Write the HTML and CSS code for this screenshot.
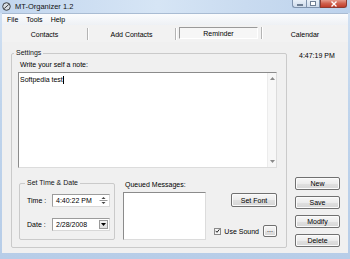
FILE: index.html
```html
<!DOCTYPE html>
<html>
<head>
<meta charset="utf-8">
<link rel="stylesheet" href="styles.css">
</head>
<body>
<div class="window">
  <div class="titlebar">
    <svg class="app-icon" width="9" height="9" viewBox="0 0 9 9"><circle cx="4.5" cy="4.5" r="3.8" fill="#d8dde2" stroke="#3b3f44" stroke-width="1"/><path d="M2.2 6.6 L6.8 2.4" stroke="#3b3f44" stroke-width="1"/></svg>
    <span class="title">MT-Organizer 1.2</span>
    <div class="controls">
      <span class="ctl min"><span class="min-bar"></span></span>
      <span class="ctl max"><span class="max-box"></span></span>
      <span class="ctl close"><svg width="8" height="6" viewBox="0 0 8 6"><path d="M1.5 0.5 L6.5 5.5 M6.5 0.5 L1.5 5.5" stroke="#fff" stroke-width="1.4"/></svg></span>
    </div>
  </div>
  <div class="client">
    <div class="menubar"><span class="menu">File</span><span class="menu">Tools</span><span class="menu">Help</span></div>
    <div class="tabs">
      <div class="tab"><span class="tab-label">Contacts</span></div>
      <div class="tab"><span class="tab-label">Add Contacts</span></div>
      <div class="tab active"><span class="tab-label">Reminder</span></div>
      <div class="tab last"><span class="tab-label">Calendar</span></div>
    </div>
    <div class="main">
      <fieldset class="group settings">
        <legend>Settings</legend>
        <div class="note-label">Write your self a note:</div>
        <div class="note">
          <div class="note-text">Softpedia test<span class="caret"></span></div>
          <div class="vscroll">
            <svg width="5" height="3" viewBox="0 0 5 3"><path d="M0 3 L2.5 0 L5 3 Z" fill="#8a8a8a"/></svg>
            <svg width="5" height="3" viewBox="0 0 5 3"><path d="M0 0 L2.5 3 L5 0 Z" fill="#8a8a8a"/></svg>
          </div>
        </div>
        <div class="bottom-row">
          <fieldset class="group timedate">
            <legend>Set Time &amp; Date</legend>
            <div class="field-row">
              <span class="lbl">Time :</span>
              <div class="input"><span class="val">4:40:22 PM</span>
                <svg class="spin" width="9" height="9" viewBox="0 0 9 9"><path d="M2.5 3 L4.5 1 L6.5 3 Z" fill="#444"/><path d="M0.5 4.5 H8.5" stroke="#9a9a9a" stroke-width="1"/><path d="M2.5 6 L4.5 8 L6.5 6 Z" fill="#444"/></svg>
              </div>
            </div>
            <div class="field-row second">
              <span class="lbl">Date :</span>
              <div class="input"><span class="val">2/28/2008</span>
                <span class="drop"><svg width="5" height="3" viewBox="0 0 5 3"><path d="M0 0 L2.5 3 L5 0 Z" fill="#000"/></svg></span>
              </div>
            </div>
          </fieldset>
          <div class="queued">
            <div class="q-label">Queued Messages:</div>
            <div class="listbox"></div>
          </div>
          <div class="opts">
            <span class="btn setfont">Set Font</span>
            <div class="sound-row">
              <span class="check"><svg width="6" height="6" viewBox="0 0 6 6"><path d="M0.8 2.8 L2.4 4.6 L5.3 1" stroke="#222" stroke-width="1.2" fill="none"/></svg></span>
              <span class="sound-label">Use Sound</span>
              <span class="btn dots">...</span>
            </div>
          </div>
        </div>
      </fieldset>
      <div class="side">
        <div class="clock">4:47:19 PM</div>
        <div class="actions">
          <span class="btn act">New</span>
          <span class="btn act">Save</span>
          <span class="btn act">Modify</span>
          <span class="btn act">Delete</span>
        </div>
      </div>
    </div>
  </div>
</div>
</body>
</html>
```
FILE: styles.css
```css
* { box-sizing: border-box; }
html, body { margin: 0; padding: 0; }
body {
  font-family: "Liberation Sans", Arial, sans-serif;
  font-size: 7px;
  color: #000;
  background: #bcd2eb;
}
.window {
  width: 350px;
  height: 259px;
  display: flex;
  flex-direction: column;
  background: linear-gradient(to bottom, #d3e2f3 0%, #bfd4ec 40%, #b7cde8 100%);
}
.titlebar {
  height: 13px;
  flex: none;
  display: flex;
  align-items: center;
  padding-left: 2px;
  background: linear-gradient(to right, #c2d6ee 0%, #d6e5f5 45%, #c9dbf0 70%, #bcd2ec 100%);
}
.app-icon { flex: none; margin-right: 4px; }
.title { font-size: 7.5px; line-height: 13px; color: #111; }
.controls {
  margin-left: auto;
  align-self: flex-start;
  display: flex;
  margin-right: 3px;
}
.ctl {
  height: 8px;
  display: flex;
  align-items: center;
  justify-content: center;
  border: 1px solid #7f93ad;
  border-top: none;
}
.min, .max {
  width: 14px;
  background: linear-gradient(to bottom, #e9f0f8, #cfdcec);
}
.min { border-radius: 0 0 0 3px; border-right: none; }
.min-bar { width: 6px; height: 2px; background: #fff; border: 1px solid #6f7f94; margin-top: 2px; }
.max-box { width: 6px; height: 5px; border: 1px solid #6f7f94; background: #fff; }
.close {
  width: 27px;
  border-color: #8e3b30;
  border-radius: 0 0 3px 0;
  background: linear-gradient(to bottom, #e59b8d 0%, #d0604c 50%, #c13d2a 100%);
}
.client {
  margin: 0 2px;
  height: 240px;
  flex: none;
  background: #f0f0f0;
  border-top: 1px solid #a9bcd3;
  display: flex;
  flex-direction: column;
}
.menubar {
  height: 11px;
  flex: none;
  display: flex;
  align-items: center;
  padding-left: 1px;
  background: linear-gradient(to bottom, #fbfcfd, #eef1f5);
}
.menu { padding: 0 4px; line-height: 11px; }
.tabs {
  height: 17px;
  flex: none;
  padding: 2px 0 3px;
  display: grid;
  grid-template-columns: 86px 88px 86px 1fr;
  background: #f2f2f2;
}
.tab {
  display: flex;
  align-items: center;
  justify-content: center;
  border-right: 1px solid #b4b4b4;
  box-shadow: 1px 0 0 #ffffff;
  height: 12px;
  margin-top: 1px;
}
.tab.last { border-right: none; box-shadow: none; }
.tab.active { padding: 0 3px; margin-top: 0; }
.tab.active .tab-label {
  flex: 1;
  height: 12px;
  display: flex;
  align-items: center;
  justify-content: center;
  border: 1px solid;
  border-color: #9a9a9a #ffffff #ffffff #9a9a9a;
  background: #f6f6f6;
}
.main {
  flex: 1;
  display: flex;
  padding-left: 9px;
}
.group {
  margin: 0;
  border: 1px solid #cacaca;
  border-radius: 2px;
  min-width: 0;
}
.group legend {
  padding: 0 2px;
  line-height: 8px;
  font-size: 7px;
  color: #151515;
}
.settings {
  margin-top: 7px;
  width: 276px;
  height: 199px;
  padding: 4px 9px 7px 6px;
  display: flex;
  flex-direction: column;
}
.settings > legend { margin-left: -4px; }
.note-label { line-height: 8px; margin-bottom: 3px; margin-left: 2px; }
.note {
  height: 96px;
  flex: none;
  display: flex;
  background: #fff;
  border: 1px solid;
  border-color: #8b8b8b #dcdcdc #dcdcdc #8b8b8b;
}
.note-text { flex: 1; padding: 3px 1px; line-height: 8px; }
.caret { display: inline-block; width: 1px; height: 8px; background: #000; vertical-align: top; }
.vscroll {
  width: 9px;
  flex: none;
  background: #f7f7f7;
  border-left: 1px solid #ececec;
  display: flex;
  flex-direction: column;
  align-items: center;
  justify-content: space-between;
  padding: 4px 0 4px;
}
.vscroll svg { display: block; }
.bottom-row {
  margin-top: 11px;
  height: 61px;
  display: flex;
}
.timedate {
  width: 96px;
  height: 61px;
  margin-left: 1px;
  padding: 7px 4px 0 7px;
  flex: none;
}
.timedate > legend { margin-left: -2px; }
.field-row { display: flex; align-items: center; height: 13px; }
.field-row.second { margin-top: 11px; }
.lbl { width: 25px; flex: none; }
.input {
  width: 58px;
  height: 13px;
  background: #fff;
  border: 1px solid;
  border-color: #9c9c9c #d8d8d8 #d8d8d8 #9c9c9c;
  display: flex;
  align-items: center;
  padding-left: 3px;
}
.val { flex: 1; }
.spin { margin-right: 1px; display: block; }
.drop {
  width: 9px;
  height: 9px;
  margin-right: 1px;
  border: 1px solid #9a9a9a;
  background: linear-gradient(to bottom, #f5f5f5, #dedede);
  display: flex;
  align-items: center;
  justify-content: center;
}
.drop svg { display: block; }
.queued {
  width: 83px;
  margin-left: 8px;
  flex: none;
  display: flex;
  flex-direction: column;
}
.q-label { line-height: 8px; margin-top: 2px; margin-left: 2px; }
.listbox {
  margin-top: 3px;
  height: 48px;
  background: #fff;
  border: 1px solid;
  border-color: #8b8b8b #dcdcdc #dcdcdc #8b8b8b;
}
.opts {
  flex: 1;
  display: flex;
  flex-direction: column;
  align-items: flex-end;
}
.btn {
  display: flex;
  align-items: center;
  justify-content: center;
  border: 1px solid #707070;
  border-radius: 2px;
  background: linear-gradient(to bottom, #f7f7f7 0%, #ececec 50%, #e0e0e0 51%, #d6d6d6 100%);
  box-shadow: inset 0 0 0 1px #fbfbfb;
  color: #000;
}
.setfont { margin-top: 14px; width: 46px; height: 14px; }
.sound-row {
  margin-top: 18px;
  height: 12px;
  display: flex;
  align-items: center;
}
.check {
  width: 7px;
  height: 7px;
  border: 1px solid #8a8a8a;
  background: #f4f4f4;
  display: flex;
  align-items: center;
  justify-content: center;
  margin-right: 3px;
}
.check svg { display: block; }
.sound-label { margin-right: 4px; }
.dots { width: 14px; height: 12px; line-height: 8px; align-items: flex-end; padding-bottom: 2px; }
.side {
  width: 61px;
  flex: none;
  display: flex;
  flex-direction: column;
}
.clock { margin-top: 10px; padding-left: 12px; line-height: 8px; }
.actions {
  margin-top: auto;
  margin-bottom: 6px;
  margin-left: 8px;
  display: flex;
  flex-direction: column;
  gap: 6px;
}
.act { width: 45px; height: 13px; }
```
